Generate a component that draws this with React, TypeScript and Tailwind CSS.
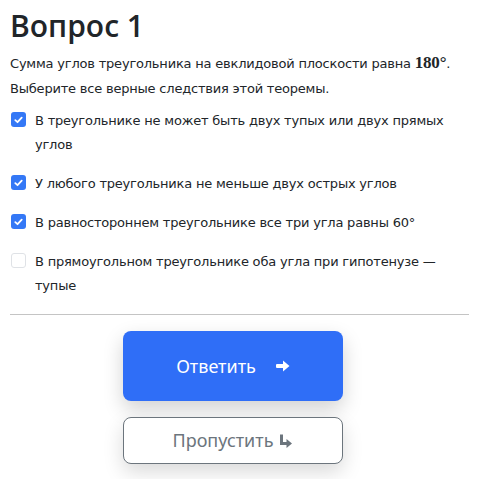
import React, { useState } from 'react';

type Option = { text: string; checked: boolean };

const initialOptions: Option[] = [
  { text: 'В треугольнике не может быть двух тупых или двух прямых углов', checked: true },
  { text: 'У любого треугольника не меньше двух острых углов', checked: true },
  { text: 'В равностороннем треугольнике все три угла равны 60°', checked: true },
  { text: 'В прямоугольном треугольнике оба угла при гипотенузе — тупые', checked: false },
];

const CheckBox: React.FC<{ checked: boolean; onClick: () => void }> = ({ checked, onClick }) => (
  <button
    type="button"
    onClick={onClick}
    className={
      checked
        ? 'mt-[3px] flex h-[15px] w-[15px] shrink-0 items-center justify-center rounded-[3px] bg-[#3478f6]'
        : 'mt-[3px] h-[15px] w-[15px] shrink-0 rounded-[3px] border border-[#dfe2e6] bg-white'
    }
  >
    {checked && (
      <svg width="9" height="8" viewBox="0 0 9 8">
        <path d="M1.3 4.2 L3.5 6.2 L7.7 1.6" fill="none" stroke="white" strokeWidth="1.8" strokeLinecap="round" strokeLinejoin="round" />
      </svg>
    )}
  </button>
);

// solid arrow with a fat head, like the font icon in the reference
const ArrowIcon = () => (
  <svg width="14" height="12" viewBox="0 0 14 12" className="ml-[20px]">
    <rect x="0" y="4" width="8" height="4" rx="1" fill="currentColor" />
    <path d="M7 0.5 L13.5 6 L7 11.5 Z" fill="currentColor" strokeLinejoin="round" />
  </svg>
);

const SkipIcon = () => (
  <svg width="14" height="16" viewBox="0 0 14 16" className="ml-[6px]">
    <path d="M2.5 1.5 L2.5 10.5 L8 10.5" fill="none" stroke="currentColor" strokeWidth="3" strokeLinejoin="miter" />
    <path d="M7.5 6 L13 10.5 L7.5 15 Z" fill="currentColor" />
  </svg>
);

const App: React.FC = () => {
  const [options, setOptions] = useState(initialOptions);

  const toggle = (i: number) =>
    setOptions(prev => prev.map((o, idx) => (idx === i ? { ...o, checked: !o.checked } : o)));

  return (
    <div className="min-h-screen bg-white px-[10px] pt-[6px] text-[#212529]" style={{ fontFamily: 'Tahoma, "DejaVu Sans", sans-serif' }}>
      <h1 className="text-[30px] font-semibold leading-[40px]" style={{ fontFamily: '"Open Sans", "Noto Sans", sans-serif' }}>
        Вопрос 1
      </h1>
      <p className="mt-[4px] text-[13px] leading-[25px] tracking-[-0.2px]">
        Сумма углов треугольника на евклидовой плоскости равна{' '}
        <b className="text-[17px]" style={{ fontFamily: '"Liberation Serif", serif' }}>180°</b>.
        <br />
        Выберите все верные следствия этой теоремы.
      </p>

      <div className="mt-[8px] flex flex-col gap-[15px] pl-[1px]">
        {options.map((o, i) => (
          <label key={i} className="flex items-start gap-[9px] text-[13px] leading-[24px] tracking-[-0.2px]">
            <CheckBox checked={o.checked} onClick={() => toggle(i)} />
            <span className="pr-[20px]">{o.text}</span>
          </label>
        ))}
      </div>

      <hr className="mt-[16px] border-t border-[#c4c4c4]" />

      <div className="ml-[113px] mt-[16px] flex w-[220px] flex-col gap-[16px]" style={{ fontFamily: '"Noto Sans", "Open Sans", sans-serif' }}>
        <button className="flex h-[70px] items-center justify-center rounded-[8px] bg-[#2f6ef7] text-[18px] text-white shadow-[0_8px_20px_rgba(0,0,0,0.18)]">
          Ответить
          <ArrowIcon />
        </button>
        <button className="flex h-[47px] items-center justify-center rounded-[8px] border border-[#6c757d] bg-white text-[18px] text-[#6c757d] shadow-[0_8px_20px_rgba(0,0,0,0.15)]">
          Пропустить
          <SkipIcon />
        </button>
      </div>
    </div>
  );
};

export default App;
